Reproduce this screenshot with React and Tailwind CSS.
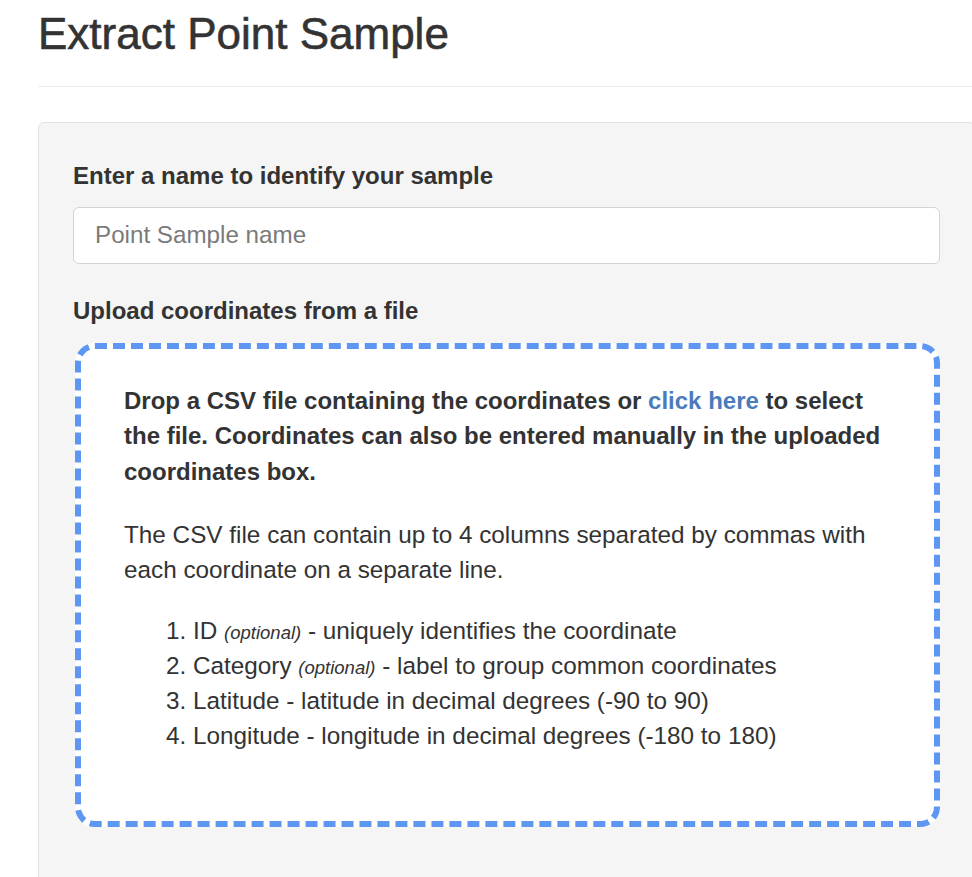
export default function App() {
  return (
    <div className="w-full min-h-screen overflow-hidden bg-white text-[#333] font-['Liberation_Sans',Arial,sans-serif]">
      <div className="w-[937px] ml-[38px]">
        {/* Page title */}
        <h1 className="mt-[10px] text-[44px] leading-[48px] font-medium text-[#333] [-webkit-text-stroke:0.6px_#333]">
          Extract Point Sample
        </h1>
        <hr className="mt-[28px] border-0 border-t border-[#eeeeee]" />

        {/* Form well */}
        <div className="mt-[35px] min-h-[800px] rounded-[6px] border border-[#e3e3e3] bg-[#f5f5f5] px-[34px] pt-[35px] pb-10">
          <label className="block text-[24px] leading-[35px] font-bold">
            Enter a name to identify your sample
          </label>
          <input
            type="text"
            placeholder="Point Sample name"
            className="mt-[13.5px] block w-full h-[57px] rounded-[6px] border border-[#d4d4d4] bg-white px-[21px] text-[24.2px] text-[#555] placeholder:text-[#7a7a7a] outline-none"
          />

          <label className="mt-[29.5px] block text-[24px] leading-[35px] font-bold">
            Upload coordinates from a file
          </label>

          {/* Drop zone */}
          <div className="mt-[14.5px] ml-[2px] h-[484px] rounded-[20px] border-[6px] border-dashed border-[#5e97f1] bg-white pl-[43px] pr-[40px] pt-[34px]">
            <p className="text-[24px] leading-[35.5px] font-bold">
              Drop a CSV file containing the coordinates or{' '}
              <a href="#" className="text-[#4a7bbb]">click here</a> to select the file. Coordinates can also be entered manually in the uploaded coordinates box.
            </p>
            <p className="mt-[27.5px] text-[24.3px] leading-[35px]">
              The CSV file can contain up to 4 columns separated by commas with each coordinate on a separate line.
            </p>
            <ol className="mt-[26px] list-decimal pl-[69px] text-[24.3px] leading-[35px]">
              <li>
                ID <em className="text-[18.5px] leading-none">(optional)</em> - uniquely identifies the coordinate
              </li>
              <li>
                Category <em className="text-[18.5px] leading-none">(optional)</em> - label to group common coordinates
              </li>
              <li>Latitude - latitude in decimal degrees (-90 to 90)</li>
              <li>Longitude - longitude in decimal degrees (-180 to 180)</li>
            </ol>
          </div>
        </div>
      </div>
    </div>
  );
}
